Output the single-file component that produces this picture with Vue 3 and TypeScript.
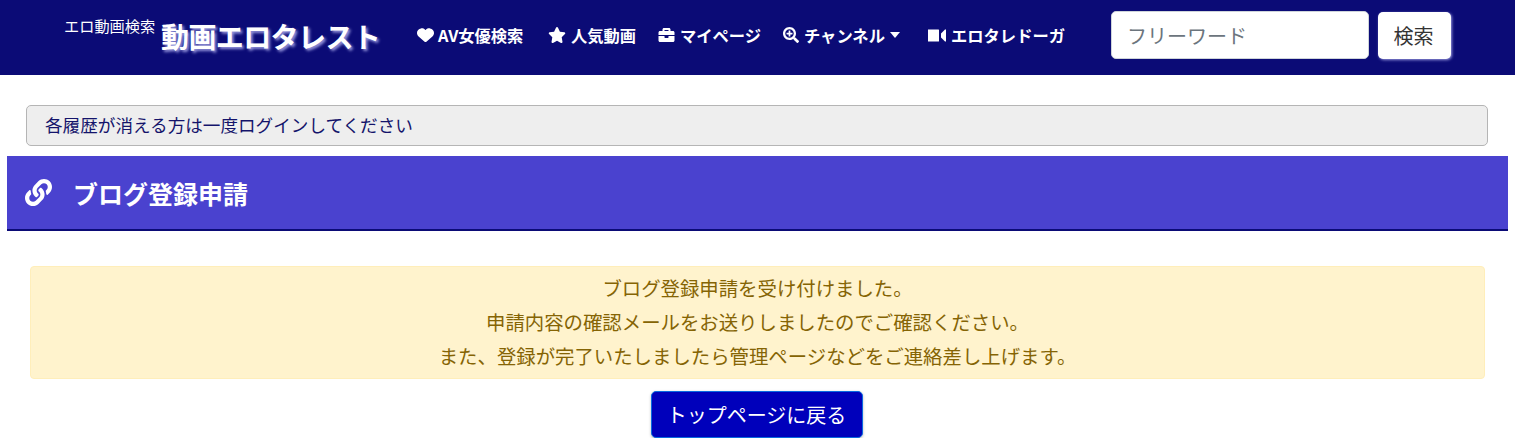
<script setup lang="ts">
const lines: string[] = [
  'ブログ登録申請を受け付けました。',
  '申請内容の確認メールをお送りしましたのでご確認ください。',
  'また、登録が完了いたしましたら管理ページなどをご連絡差し上げます。',
]
</script>

<template>
  <div class="page">
    <header class="navbar">
      <div class="brand">
        <span class="tag">エロ動画検索</span>
        <span class="logo">動画エロタレスト</span>
      </div>
      <nav class="nav">
        <a class="item i1">
          <svg class="ic heart" viewBox="0 0 512 512" preserveAspectRatio="none"><path fill="#fff" d="M47.600 300.400L228.300 469.100c7.500 7 17.400 10.900 27.700 10.900s20.200-3.900 27.700-10.900L464.400 300.400c30.400-28.300 47.600-68 47.600-109.500v-5.800c0-69.900-50.500-129.500-119.400-141C347 36.500 300.600 51.400 268 84L256 96 244 84c-32.600-32.600-79-47.500-124.600-39.900C50.500 55.600 0 115.200 0 185.100v5.800c0 41.500 17.200 81.200 47.600 109.500z"/></svg>
          <span>AV女優検索</span>
        </a>
        <a class="item i2">
          <svg class="ic star" viewBox="0 0 576 512"><path fill="#fff" d="M316.900 18C311.600 7 300.400 0 288.100 0s-23.400 7-28.800 18L195 150.300 51.400 171.500c-12 1.800-22 10.200-25.700 21.700s-.7 24.200 7.900 32.700L137.800 329 113.200 474.700c-2 12 3 24.200 12.900 31.300s23 8 33.800 2.300l128.300-68.500 128.300 68.500c10.800 5.700 23.900 4.900 33.800-2.300s14.900-19.300 12.900-31.300L438.500 329 542.700 225.900c8.600-8.500 11.700-21.200 7.900-32.700s-13.700-19.900-25.700-21.700L381.200 150.300 316.900 18z"/></svg>
          <span>人気動画</span>
        </a>
        <a class="item i3">
          <svg class="ic case" viewBox="0 0 512 512"><path fill="#fff" d="M320 336c0 8.840-7.160 16-16 16h-96c-8.840 0-16-7.160-16-16v-48H0v144c0 25.600 22.400 48 48 48h416c25.600 0 48-22.400 48-48V288H320v48zm144-208h-80V80c0-25.600-22.400-48-48-48H176c-25.600 0-48 22.400-48 48v48H48c-25.600 0-48 22.400-48 48v80h512v-80c0-25.600-22.400-48-48-48zm-144 0H192V96h128v32z"/></svg>
          <span>マイページ</span>
        </a>
        <a class="item i4">
          <svg class="ic" viewBox="0 0 512 512"><path fill="#fff" d="M304 192v32c0 6.600-5.400 12-12 12h-56v56c0 6.600-5.400 12-12 12h-32c-6.600 0-12-5.400-12-12v-56h-56c-6.600 0-12-5.400-12-12v-32c0-6.600 5.400-12 12-12h56v-56c0-6.600 5.400-12 12-12h32c6.600 0 12 5.400 12 12v56h56c6.600 0 12 5.400 12 12zm201 284.700L476.700 505c-9.400 9.400-24.600 9.400-33.900 0L343 405.300c-4.500-4.500-7-10.600-7-17V372c-35.300 27.600-79.700 44-128 44C93.100 416 0 322.900 0 208S93.100 0 208 0s208 93.100 208 208c0 48.300-16.400 92.700-44 128h16.300c6.400 0 12.500 2.500 17 7l99.700 99.700c9.300 9.400 9.300 24.600 0 34zM344 208c0-75.200-60.800-136-136-136S72 132.800 72 208s60.800 136 136 136 136-60.800 136-136z"/></svg>
          <span>チャンネル</span>
          <i class="caret"></i>
        </a>
        <a class="item i5">
          <svg class="ic vid" viewBox="0 0 18 13"><path fill="#fff" d="M0 .5h10.500a.5.500 0 0 1 .5.500v11a.5.500 0 0 1-.5.500H0zM13 4.500l4-4h1v12h-1l-4-4z"/></svg>
          <span>エロタレドーガ</span>
        </a>
      </nav>
      <form class="search" @submit.prevent>
        <input class="field" type="text" placeholder="フリーワード" />
        <button class="go" type="button">検索</button>
      </form>
    </header>

    <main class="main">
      <div class="notice">各履歴が消える方は一度ログインしてください</div>
      <h1 class="banner">
        <svg class="link" viewBox="0 0 512 512"><path fill="#fff" d="M326.612 185.391c59.747 59.809 58.927 155.698.36 214.590-.11.12-.24.25-.36.37l-67.200 67.200c-59.270 59.270-155.699 59.262-214.960 0-59.270-59.260-59.270-155.700 0-214.960l37.106-37.106c9.840-9.840 26.786-3.300 27.294 10.606.648 17.722 3.826 35.527 9.690 52.721 1.986 5.822.567 12.262-3.783 16.612l-13.087 13.087c-28.026 28.026-28.905 73.660-1.155 101.960 28.024 28.579 74.086 28.749 102.325.51l67.200-67.190c28.191-28.191 28.073-73.757 0-101.830-3.701-3.694-7.429-6.564-10.341-8.569a16.037 16.037 0 0 1-6.947-12.606c-.396-10.567 3.348-21.456 11.698-29.806l21.054-21.055c5.521-5.521 14.182-6.199 20.584-1.731a152.482 152.482 0 0 1 20.522 17.197zM467.547 44.449c-59.261-59.262-155.690-59.270-214.960 0l-67.200 67.200c-.12.120-.25.250-.36.370-58.566 58.892-59.387 154.781.36 214.590a152.454 152.454 0 0 0 20.521 17.196c6.402 4.468 15.064 3.789 20.584-1.731l21.054-21.055c8.350-8.350 12.094-19.239 11.698-29.806a16.037 16.037 0 0 0-6.947-12.606c-2.912-2.005-6.640-4.875-10.341-8.569-28.073-28.073-28.191-73.639 0-101.830l67.200-67.190c28.239-28.239 74.300-28.069 102.325.51 27.750 28.300 26.872 73.934-1.155 101.960l-13.087 13.087c-4.350 4.350-5.769 10.790-3.783 16.612 5.864 17.194 9.042 34.999 9.690 52.721.509 13.906 17.454 20.446 27.294 10.606l37.106-37.106c59.271-59.259 59.271-155.699.001-214.959z"/></svg>
        <span>ブログ登録申請</span>
      </h1>
      <section class="alert">
        <p v-for="line in lines" :key="line">{{ line }}</p>
      </section>
      <div class="back-wrap">
        <a class="back">トップページに戻る</a>
      </div>
    </main>
  </div>
</template>

<style>
html, body { margin: 0; background: #fff; overflow: hidden; }
</style>

<style scoped>
.page {
  width: 1515px;
  font-family: "Noto Sans CJK JP", "Liberation Sans", sans-serif;
  font-size: 16px;
  color: #222;
}
.navbar {
  height: 75px;
  background: #0b0b76;
  display: flex;
  align-items: center;
  box-sizing: border-box;
  padding: 0 0 5px 64px;
}
.brand {
  width: 353px;
  display: flex;
  align-items: flex-start;
  color: #fff;
  flex: none;
}
.tag { font-size: 15.2px; line-height: 20px; margin-top: -2px; width: 97px; white-space: nowrap; }
.logo {
  font-size: 28px;
  line-height: 34px;
  margin-top: 2px;
  font-weight: 700;
  white-space: nowrap;
  text-shadow: 2px 2px 3px #9a9adf;
  letter-spacing: -0.6px;
}
.nav { display: flex; align-items: center; flex: none; width: 694px; color: #fff; }
.item {
  display: flex;
  align-items: center;
  font-size: 16.3px;
  font-weight: 700;
  line-height: 22px;
  white-space: nowrap;
}
.i1 { width: 130px; margin-right: 1px; }
.i2 { width: 110px; }
.i3 { width: 125px; }
.i4 { width: 145px; }
.ic { width: 16px; height: 16px; margin-right: 5px; flex: none; }
.heart { width: 17px; margin-right: 4px; }
.star { width: 18px; margin-right: 5px; }
.case { width: 17px; margin-right: 5px; }
.vid { width: 18px; height: 13px; margin-right: 5px; }
.caret {
  margin-left: 5px;
  border-top: 6px solid #fff;
  border-left: 5.500px solid transparent;
  border-right: 5.500px solid transparent;
}
.search { display: flex; align-items: center; margin: 0; }
.field {
  box-sizing: border-box;
  width: 258px;
  height: 48px;
  border: 1px solid #ced4da;
  border-radius: 5px;
  padding: 0 15px;
  font: 20px "Noto Sans CJK JP", sans-serif;
  color: #495057;
  background: #fff;
  outline: none;
}
.field::placeholder { color: #6c757d; opacity: 1; }
.go {
  box-sizing: border-box;
  width: 73px;
  height: 47px;
  margin-left: 9px;
  border: 0;
  border-radius: 5px;
  background: #fff;
  color: #333;
  font: 20px "Noto Sans CJK JP", sans-serif;
  box-shadow: 1px 1px 3px #9a9adf;
  padding: 0 2px 0 0;
}
.main { padding: 30px 7px 0 7px; }
.notice {
  box-sizing: border-box;
  margin: 0 19px;
  height: 41px;
  width: 1462px;
  background: #eee;
  border: 1px solid #b5b5b5;
  border-radius: 5px;
  padding-left: 18px;
  color: #14146b;
  line-height: 38px;
  font-size: 17.6px;
}
.banner {
  box-sizing: border-box;
  margin: 10px 0 0;
  height: 75px;
  background: #4a42cf;
  border-bottom: 2px solid #0b0b76;
  display: flex;
  align-items: center;
  padding-left: 18px;
  color: #fff;
  font-size: 25px;
  font-weight: 700;
}
.link { width: 27px; height: 27px; margin-right: 21px; flex: none; }
.alert {
  box-sizing: border-box;
  margin: 35px 23px 0;
  width: 1455px;
  height: 113px;
  background: #fff3cd;
  border: 1px solid #ffeeba;
  border-radius: 4px;
  color: #856404;
  text-align: center;
  padding: 4px 0 0;
}
.alert p { margin: 0; line-height: 34px; font-size: 19.4px; }
.back-wrap { display: flex; justify-content: center; margin: 12px 2px 0 0; }
.back {
  box-sizing: border-box;
  width: 212px;
  height: 47px;
  background: #0000bb;
  border: 1px solid #0a6ae0;
  border-radius: 5px;
  color: #fff;
  font-size: 20px;
  line-height: 46px;
  text-align: center;
  box-shadow: 0 1px 3px #bbb;
}
</style>
